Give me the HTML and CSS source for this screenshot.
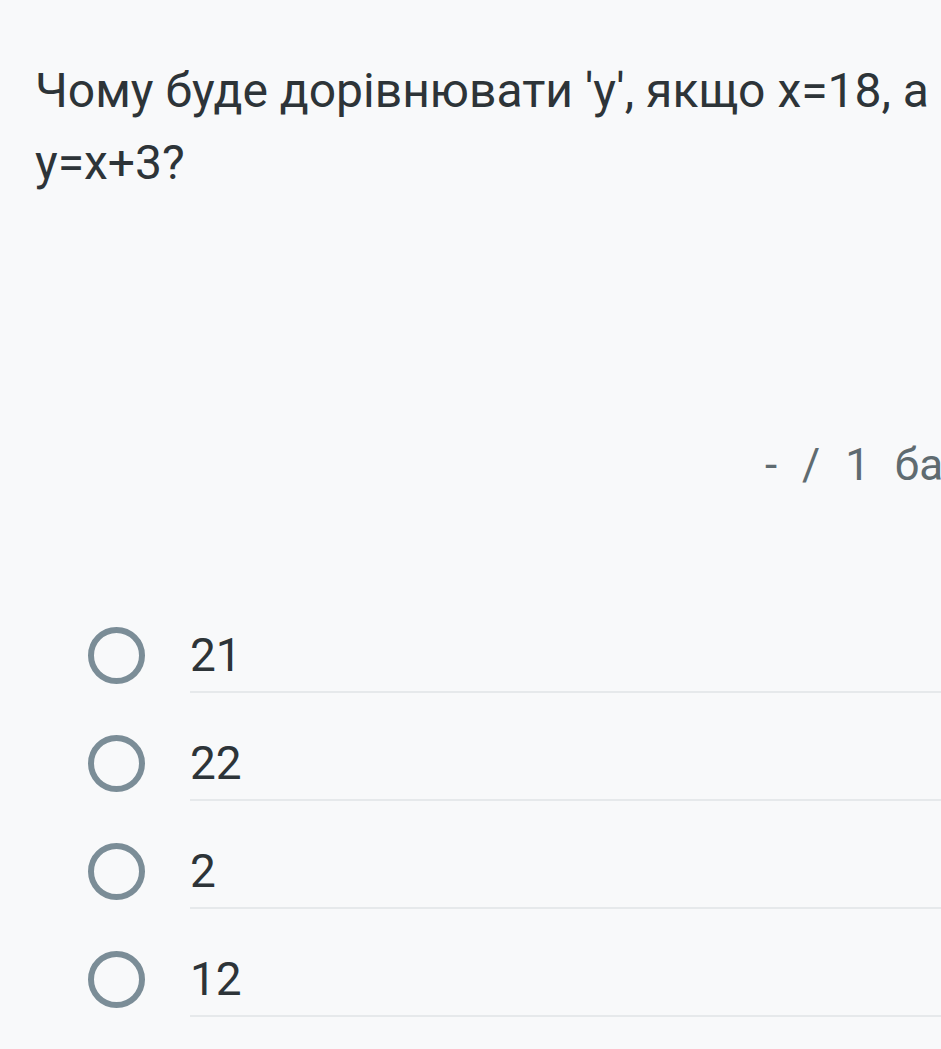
FILE: index.html
```html
<!DOCTYPE html>
<html lang="uk">
<head>
  <meta charset="UTF-8">
  <title>Питання</title>
  <link rel="stylesheet" href="styles.css">
</head>
<body>
  <!-- Question card -->
  <div class="question">
    <div class="question-title">Чому буде дорівнювати 'у', якщо х=18, а у=х+3?</div>
    <div class="points">- / 1 бал</div>

    <!-- Answer options -->
    <div class="options">
      <div class="option">
        <span class="radio"></span>
        <span class="option-label">21</span>
      </div>
      <div class="option">
        <span class="radio"></span>
        <span class="option-label">22</span>
      </div>
      <div class="option">
        <span class="radio"></span>
        <span class="option-label">2</span>
      </div>
      <div class="option">
        <span class="radio"></span>
        <span class="option-label">12</span>
      </div>
    </div>
  </div>
</body>
</html>
```

FILE: styles.css
```css
body {
  margin: 0;
  background: #f8f9fa;
  font-family: Roboto, "Noto Sans", sans-serif;
  color: #2d3438;
  overflow: hidden;
}

.question {
  padding: 55px 0 0 35px;
}

.question-title {
  font-size: 48px;
  line-height: 72px;
  padding-right: 8px;
}

.points {
  margin-top: 240px;
  padding-left: 730px;
  font-size: 44px;
  color: #5f6b70;
  white-space: nowrap;
  word-spacing: 14px;
}

.options {
  margin-top: 128px;
  padding-left: 53px;
}

.option {
  display: flex;
  align-items: flex-start;
  margin-bottom: 34px;
}

.radio {
  width: 45px;
  height: 45px;
  margin-top: 8px;
  border: 6px solid #7b8d97;
  border-radius: 50%;
  flex-shrink: 0;
}

.option-label {
  flex: 1;
  margin-left: 45px;
  font-size: 46px;
  line-height: 72px;
  border-bottom: 2px solid #e6e9eb;
}
```
